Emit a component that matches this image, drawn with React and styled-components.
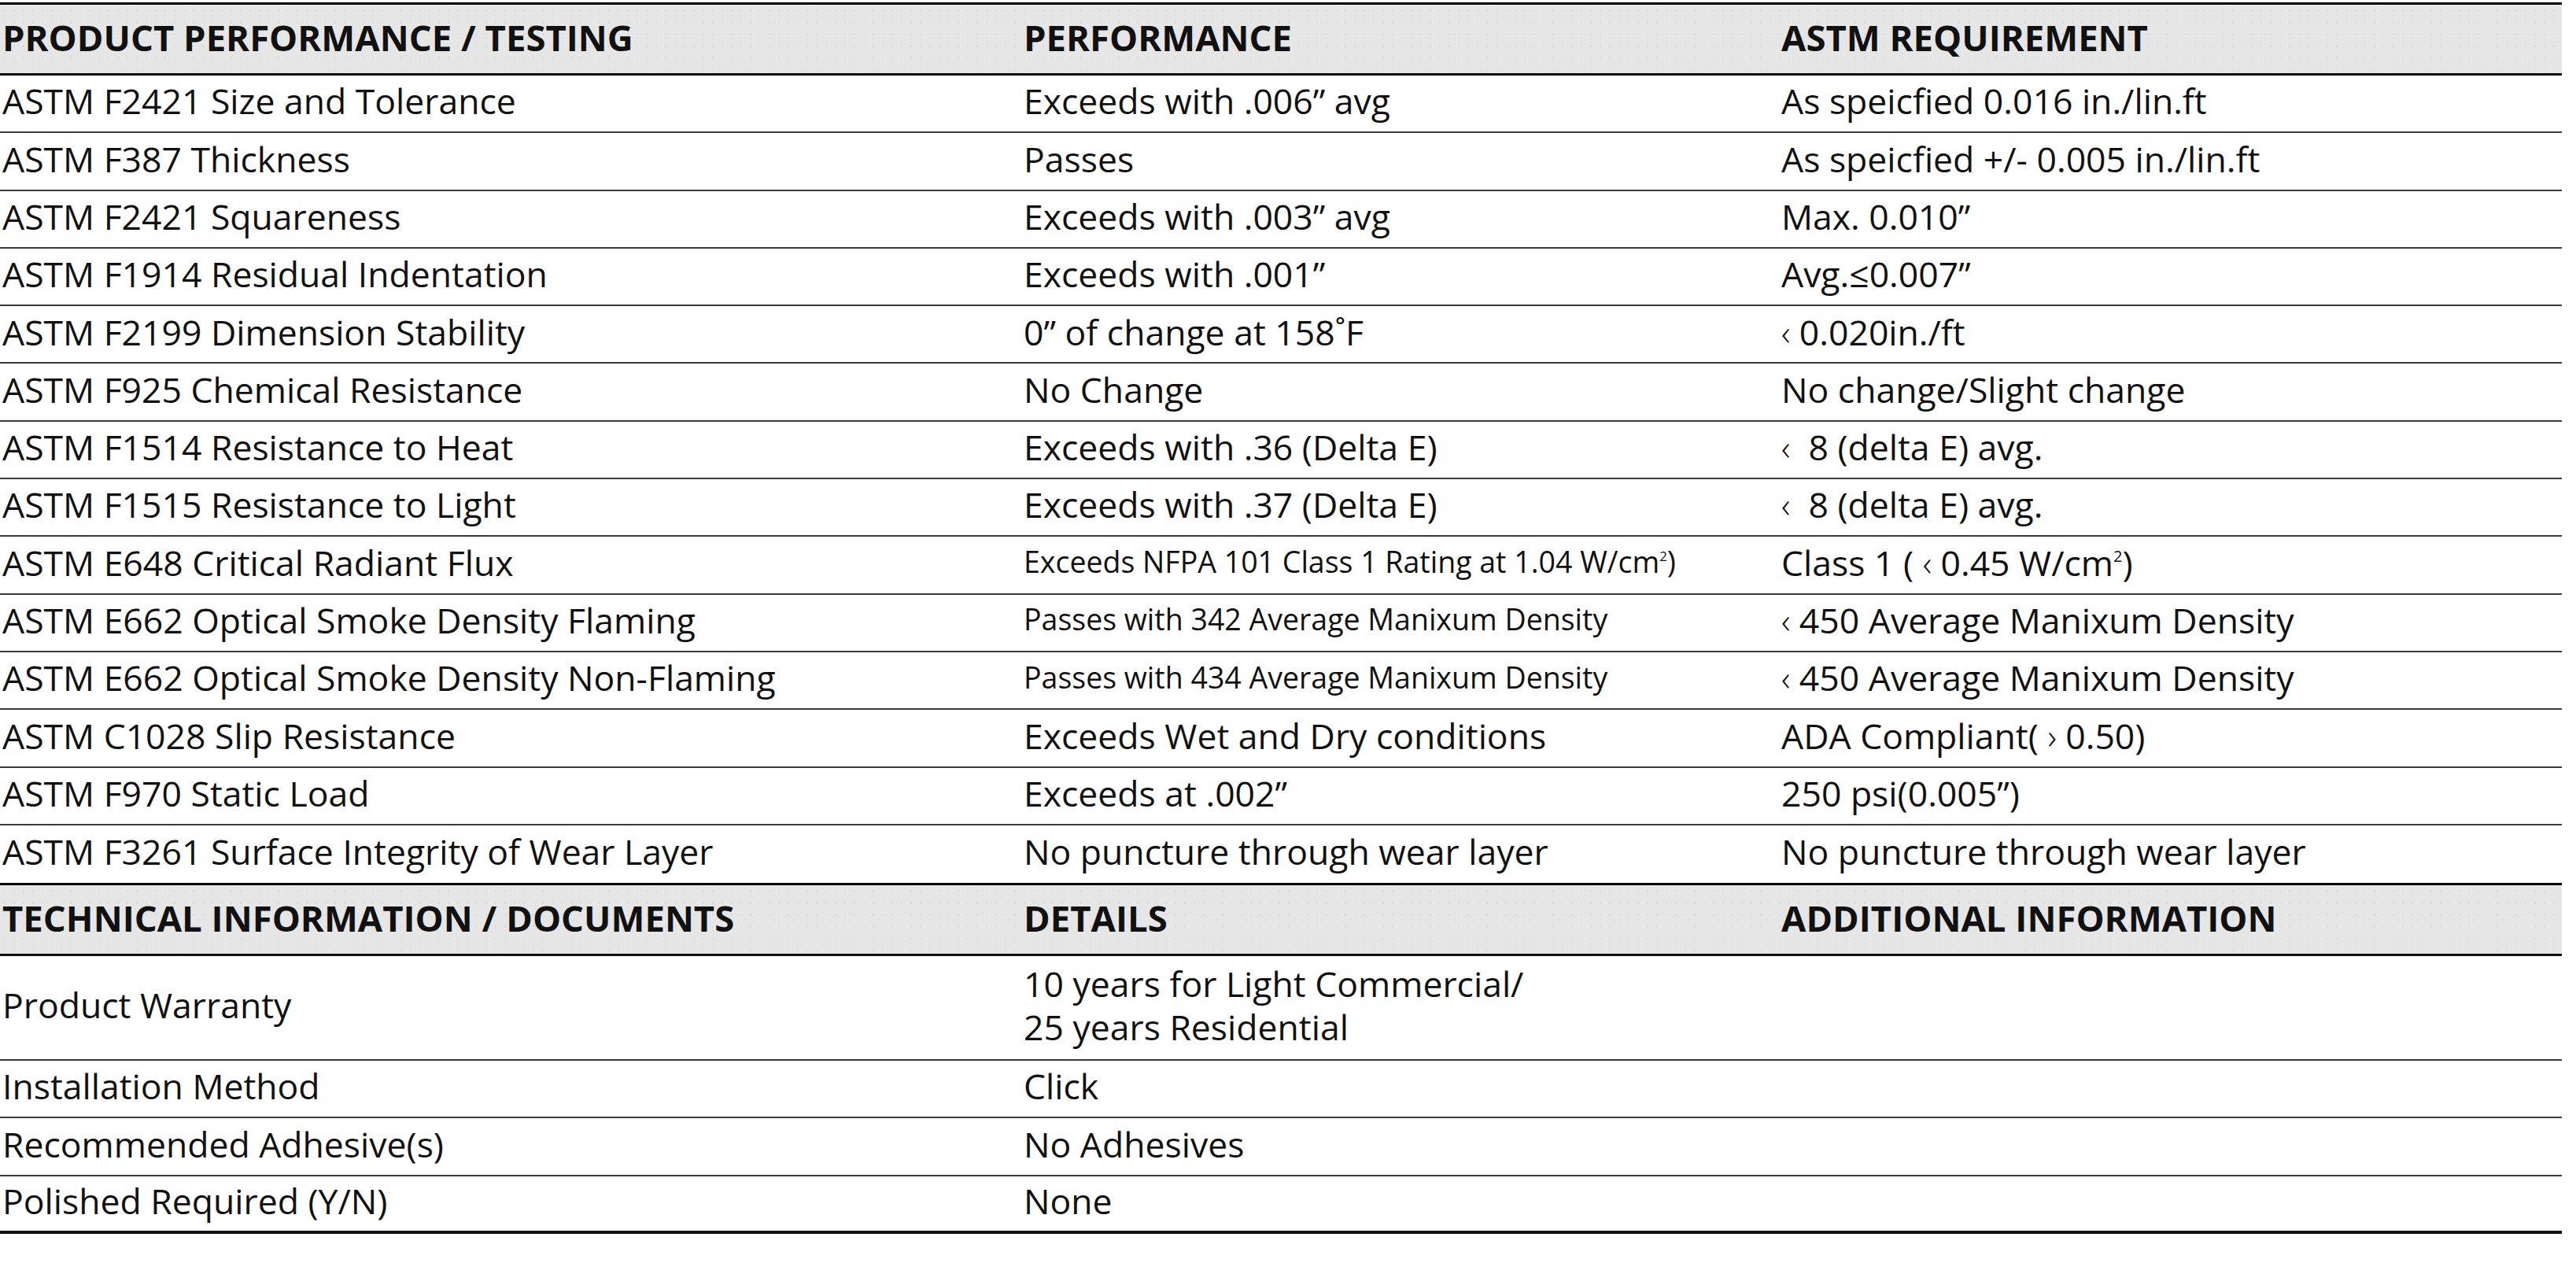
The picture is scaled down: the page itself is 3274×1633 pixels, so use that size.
import React from 'react'
import styled, { createGlobalStyle } from 'styled-components'

const GlobalStyle = createGlobalStyle`
  html, body {
    margin: 0;
    padding: 0;
    background: #fff;
  }
  body {
    font-family: "Open Sans", "Noto Sans", "DejaVu Sans", sans-serif;
    color: #111;
  }
`

const Sheet = styled.div`
  width: 3256px;
  padding-top: 3px;
`

const HeadRow = styled.div`
  display: grid;
  grid-template-columns: 1291px 963px 1002px;
  height: 93px;
  box-sizing: border-box;
  border-top: 3px solid #000;
  border-bottom: 3px solid #111;
  background-color: #e6e6e6;
  background-image: radial-gradient(#d6d6d6 0.8px, transparent 1px);
  background-size: 12px 15px;
`

const Row = styled.div`
  display: grid;
  grid-template-columns: 1291px 963px 1002px;
  height: ${props => props.h || 73.3}px;
  box-sizing: border-box;
  border-bottom: ${props => (props.last ? '4px solid #111' : props.none ? 'none' : '2px solid #3a3a3a')};
`

const Cell = styled.div`
  display: flex;
  flex-direction: column;
  justify-content: center;
  align-items: flex-start;
  padding-left: ${props => (props.first ? 3 : 10)}px;
  padding-bottom: ${props => (props.head ? 5 : 7)}px;
  font-size: ${props => (props.head ? 45.5 : props.small ? 37.5 : 44.5)}px;
  font-weight: ${props => (props.head ? 700 : 400)};
  line-height: 1.25;
  white-space: pre;
`

const Sup = styled.span`
  font-size: 0.45em;
  vertical-align: 0.9em;
  line-height: 1;
`

const Angle = styled.span`
  font-weight: 300;
`

const cm2 = <>cm<Sup>2</Sup></>
const lt = <Angle>‹</Angle>
const gt = <Angle>›</Angle>

const testing = [
  ['ASTM F2421 Size and Tolerance', 'Exceeds with .006” avg', 'As speicfied 0.016 in./lin.ft'],
  ['ASTM F387 Thickness', 'Passes', 'As speicfied +/- 0.005 in./lin.ft'],
  ['ASTM F2421 Squareness', 'Exceeds with .003” avg', 'Max. 0.010”'],
  ['ASTM F1914 Residual Indentation', 'Exceeds with .001”', 'Avg.≤0.007”'],
  ['ASTM F2199 Dimension Stability', '0” of change at 158˚F', <>{lt} 0.020in./ft</>],
  ['ASTM F925 Chemical Resistance', 'No Change', 'No change/Slight change'],
  ['ASTM F1514 Resistance to Heat', 'Exceeds with .36 (Delta E)', <>{lt}  8 (delta E) avg.</>],
  ['ASTM F1515 Resistance to Light', 'Exceeds with .37 (Delta E)', <>{lt}  8 (delta E) avg.</>],
  ['ASTM E648 Critical Radiant Flux', <>Exceeds NFPA 101 Class 1 Rating at 1.04 W/{cm2})</>, <>Class 1 ( {lt} 0.45 W/{cm2})</>, true],
  ['ASTM E662 Optical Smoke Density Flaming', 'Passes with 342 Average Manixum Density', <>{lt} 450 Average Manixum Density</>, true],
  ['ASTM E662 Optical Smoke Density Non-Flaming', 'Passes with 434 Average Manixum Density', <>{lt} 450 Average Manixum Density</>, true],
  ['ASTM C1028 Slip Resistance', 'Exceeds Wet and Dry conditions', <>ADA Compliant( {gt} 0.50)</>],
  ['ASTM F970 Static Load', 'Exceeds at .002”', '250 psi(0.005”)'],
  ['ASTM F3261 Surface Integrity of Wear Layer', 'No puncture through wear layer', 'No puncture through wear layer'],
]

const technical = [
  ['Installation Method', 'Click', ''],
  ['Recommended Adhesive(s)', 'No Adhesives', ''],
  ['Polished Required (Y/N)', 'None', ''],
]

const Header = ({ cols }) => (
  <HeadRow>
    <Cell head first><span>{cols[0]}</span></Cell>
    <Cell head><span>{cols[1]}</span></Cell>
    <Cell head><span>{cols[2]}</span></Cell>
  </HeadRow>
)

const App = () => (
  <>
    <GlobalStyle />
    <Sheet>
      <Header cols={['PRODUCT PERFORMANCE / TESTING', 'PERFORMANCE', 'ASTM REQUIREMENT']} />
      {testing.map((r, i) => (
        <Row key={i} none={i === testing.length - 1}>
          <Cell first><span>{r[0]}</span></Cell>
          <Cell small={r[3]}><span>{r[1]}</span></Cell>
          <Cell><span>{r[2]}</span></Cell>
        </Row>
      ))}
      <Header cols={['TECHNICAL INFORMATION / DOCUMENTS', 'DETAILS', 'ADDITIONAL INFORMATION']} />
      <Row h={133}>
        <Cell first><span>Product Warranty</span></Cell>
        <Cell>
          <span>10 years for Light Commercial/</span>
          <span>25 years Residential</span>
        </Cell>
        <Cell />
      </Row>
      {technical.map((r, i) => (
        <Row key={i} last={i === technical.length - 1}>
          <Cell first><span>{r[0]}</span></Cell>
          <Cell><span>{r[1]}</span></Cell>
          <Cell><span>{r[2]}</span></Cell>
        </Row>
      ))}
    </Sheet>
  </>
)

export default App
